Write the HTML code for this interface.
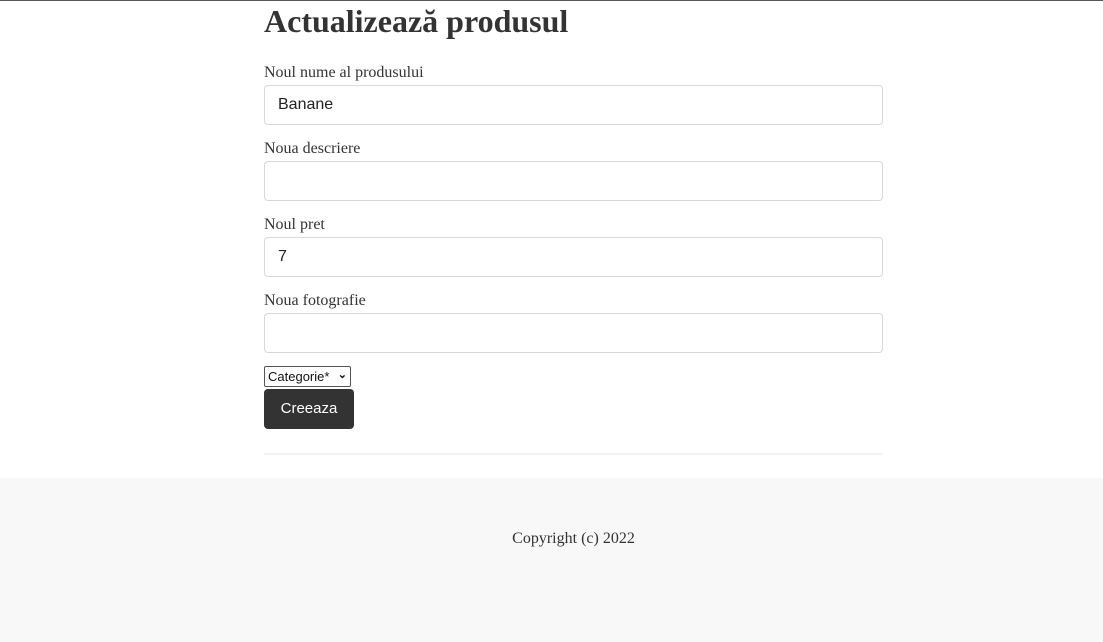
<!DOCTYPE html>
<html><head><meta charset="utf-8"><style>
*{box-sizing:border-box}
body{margin:0;width:1103px;height:642px;overflow:hidden;font-family:"Liberation Serif",serif;color:#333;background:#fff}
.top{position:absolute;left:0;top:0;width:1103px;height:1px;background:#555}
.wrap{position:absolute;left:264px;width:619px;top:0}
h1{position:absolute;top:3px;left:0;margin:0;font-size:32px;font-weight:bold;white-space:nowrap}
.lbl{position:absolute;left:0;font-size:16px;color:#333}
.inp{position:absolute;left:0;width:619px;height:40px;border:1px solid #d8d8d8;border-radius:4px;font-family:"Liberation Sans",sans-serif;font-size:16px;padding:10px 13px;color:#222}
.sel{position:absolute;left:0;top:366px;width:87px;height:21px;border:1px solid #555;border-radius:2px;font-family:"Liberation Sans",sans-serif;font-size:13px;padding:2px 3px;color:#111;white-space:nowrap}
.sel span{position:absolute;right:3px;top:1px;font-size:11px;font-weight:bold}
.btn{position:absolute;left:0;top:389px;width:90px;height:40px;background:#333;color:#fff;border-radius:4px;font-family:"Liberation Sans",sans-serif;font-size:15px;text-align:center;line-height:40px}
.hr{position:absolute;left:0;top:453px;width:619px;height:2px;background:#f3f3f3}
.foot{position:absolute;left:0;top:478px;width:1103px;height:164px;background:#f8f8f8;font-size:16px}
.foot div{position:absolute;left:264px;width:619px;top:52px;text-align:center}
</style></head><body>
<div class="top"></div>
<div class="wrap">
<h1>Actualizează produsul</h1>
<div class="lbl" style="top:64px">Noul nume al produsului</div>
<div class="inp" style="top:85px">Banane</div>
<div class="lbl" style="top:140px">Noua descriere</div>
<div class="inp" style="top:161px"></div>
<div class="lbl" style="top:216px">Noul pret</div>
<div class="inp" style="top:237px">7</div>
<div class="lbl" style="top:292px">Noua fotografie</div>
<div class="inp" style="top:313px"></div>
<div class="sel">Categorie*<span>⌄</span></div>
<div class="btn">Creeaza</div>
<div class="hr"></div>
</div>
<div class="foot"><div>Copyright (c) 2022</div></div>
</body></html>
